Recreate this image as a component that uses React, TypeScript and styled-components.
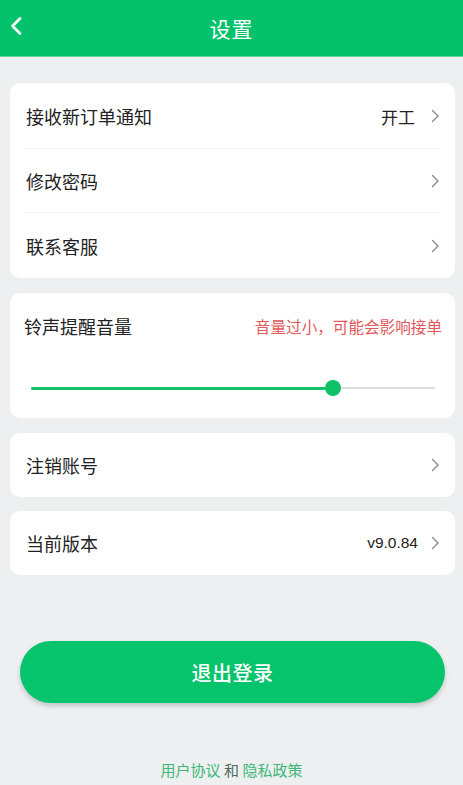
import styled, { createGlobalStyle } from 'styled-components';

const GlobalStyle = createGlobalStyle`
  html, body {
    margin: 0;
    padding: 0;
    background: #eeeff1;
  }
  body {
    font-family: 'Noto Sans CJK SC', 'Noto Sans', sans-serif;
    color: #222222;
  }
`;

const Page = styled.div`
  width: 463px;
  min-height: 785px;
  display: flex;
  flex-direction: column;
  background: #eeeff1;
`;

const Header = styled.div`
  height: 57px;
  background: #03c26b;
  display: flex;
  align-items: center;
  justify-content: center;
  position: relative;
  border-bottom: 1px solid #5fd898;
  box-sizing: border-box;
`;

const BackButton = styled.div`
  position: absolute;
  left: 9px;
  top: 16px;
  width: 16px;
  height: 20px;
  display: flex;
`;

const Title = styled.div`
  color: #ffffff;
  font-size: 21px;
  letter-spacing: 1px;
`;

const Content = styled.div`
  display: flex;
  flex-direction: column;
  padding: 26px 8px 0 10px;
`;

const Card = styled.div<{ $gap?: number }>`
  background: #ffffff;
  border-radius: 10px;
  margin-bottom: ${({ $gap }) => $gap ?? 15}px;
  display: flex;
  flex-direction: column;
`;

const Row = styled.div<{ $divider?: boolean; $h?: number }>`
  height: ${({ $h }) => $h ?? 64}px;
  display: flex;
  align-items: center;
  padding: 0 15px 0 16px;
  position: relative;
  ${({ $divider }) =>
    $divider &&
    `
    &::after {
      content: '';
      position: absolute;
      left: 15px;
      right: 16px;
      bottom: 0;
      height: 1px;
      background: #f1f1f3;
    }
  `}
`;

const Label = styled.div`
  font-size: 18px;
  color: #222222;
  flex: 1;
`;

const Value = styled.div<{ $latin?: boolean }>`
  font-size: ${({ $latin }) => ($latin ? '15.5px' : '17px')};
  font-family: ${({ $latin }) =>
    $latin ? "'Liberation Sans', Arial, sans-serif" : "'Noto Sans CJK SC', sans-serif"};
  color: #222222;
  margin-right: ${({ $latin }) => ($latin ? 13 : 16)}px;
`;

const Chevron = () => (
  <svg width="9" height="14" viewBox="0 0 9 14">
    <path d="M1.5 1.5 L7 7 L1.5 12.5" fill="none" stroke="#8a8a8a" strokeWidth="1.4" strokeLinecap="round" strokeLinejoin="round" />
  </svg>
);

const VolumeCard = styled(Card)`
  height: 125px;
  padding: 20px 13px 0 14px;
  box-sizing: border-box;
`;

const VolumeHead = styled.div`
  display: flex;
  align-items: center;
  justify-content: space-between;
`;

const VolumeTitle = styled.div`
  font-size: 18px;
  color: #222222;
`;

const Warning = styled.div`
  font-size: 15.6px;
  color: #e2585a;
`;

const SliderWrap = styled.div`
  margin: 40px 7px 0 7px;
  height: 18px;
  position: relative;
  display: flex;
  align-items: center;
`;

const Track = styled.div`
  width: 100%;
  height: 2px;
  background: #dcdcde;
  border-radius: 1px;
  position: relative;
`;

const Fill = styled.div`
  position: absolute;
  left: 0;
  top: -0.5px;
  height: 3px;
  background: #14c06a;
  border-radius: 2px;
`;

const Thumb = styled.div`
  position: absolute;
  top: 50%;
  width: 16px;
  height: 16px;
  margin: -8px 0 0 -8px;
  border-radius: 50%;
  background: #0fc168;
`;

const LogoutButton = styled.button`
  margin: 66px 18px 0 20px;
  height: 62px;
  border: none;
  border-radius: 31px;
  background: #05c46c;
  color: #ffffff;
  font-family: 'Noto Sans CJK SC', sans-serif;
  font-size: 20px;
  font-weight: 500;
  letter-spacing: 0.5px;
  box-shadow: 0 3px 5px rgba(0, 0, 0, 0.18);
`;

const Footer = styled.div`
  margin-top: 56px;
  text-align: center;
  font-size: 15px;
`;

const Link = styled.span`
  color: #3cb878;
`;

const Conj = styled.span`
  color: #4f6b5c;
`;

const volume = 74.8;

const App = () => (
  <Page>
    <GlobalStyle />
    <Header>
      <BackButton>
        <svg width="16" height="20" viewBox="0 0 16 20">
          <path d="M11 2.5 L3.5 10 L11 17.5" fill="none" stroke="#ffffff" strokeWidth="2.6" strokeLinecap="round" strokeLinejoin="round" />
        </svg>
      </BackButton>
      <Title>设置</Title>
    </Header>
    <Content>
      <Card>
        <Row $divider $h={66}>
          <Label>接收新订单通知</Label>
          <Value>开工</Value>
          <Chevron />
        </Row>
        <Row $divider>
          <Label>修改密码</Label>
          <Chevron />
        </Row>
        <Row $h={65}>
          <Label>联系客服</Label>
          <Chevron />
        </Row>
      </Card>
      <VolumeCard>
        <VolumeHead>
          <VolumeTitle>铃声提醒音量</VolumeTitle>
          <Warning>音量过小，可能会影响接单</Warning>
        </VolumeHead>
        <SliderWrap>
          <Track>
            <Fill style={{ width: `${volume}%` }} />
          </Track>
          <Thumb style={{ left: `${volume}%` }} />
        </SliderWrap>
      </VolumeCard>
      <Card $gap={14}>
        <Row>
          <Label>注销账号</Label>
          <Chevron />
        </Row>
      </Card>
      <Card $gap={0}>
        <Row>
          <Label>当前版本</Label>
          <Value $latin>v9.0.84</Value>
          <Chevron />
        </Row>
      </Card>
    </Content>
    <LogoutButton>退出登录</LogoutButton>
    <Footer>
      <Link>用户协议</Link> <Conj>和</Conj> <Link>隐私政策</Link>
    </Footer>
  </Page>
);

export default App;
